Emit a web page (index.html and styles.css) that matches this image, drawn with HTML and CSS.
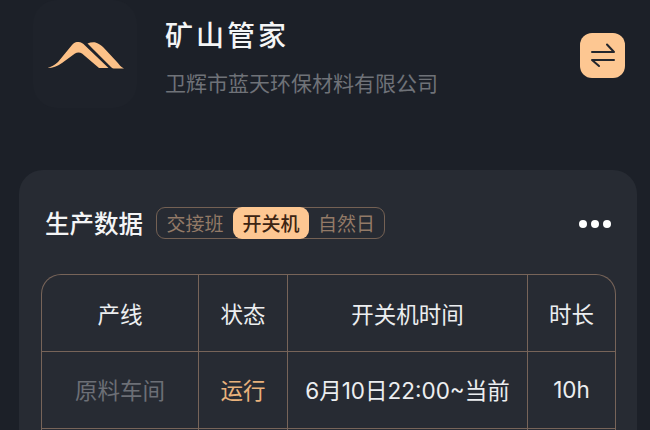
FILE: index.html
```html
<!DOCTYPE html>
<html lang="zh-CN">
<head>
    <meta charset="UTF-8">
    <meta name="viewport" content="width=device-width, initial-scale=1.0">
    <title>矿山管家</title>
    <link rel="stylesheet" href="styles.css">
</head>
<body>
    <div class="page">
        <header class="top-bar">
            <div class="logo-tile">
                <svg class="logo" viewBox="0 0 80 30" width="80" height="30">
                    <path d="M0.500 29 C4 28 8 26 11 23 L25 6 C27 3.500 29 3 31.500 3 C34 3 36 4.500 38 6.500 L61.500 29 L52 29 L35 14.500 C33 13 30 13 28 14.500 L15 24 C10 27.500 6 29 0.500 29 Z" fill="#fcc188"/>
                    <path d="M40.500 4.500 C43 3.500 46 3 48.500 3.500 C52 4.500 54.500 6.500 56.500 8.500 L70 23 C72 25.500 74 28 77 29.500 L68 29.500 C66 29.500 65 29 64 28 L50 14 C47 11 44 8 40.500 4.500 Z" fill="#fcc188"/>
                </svg>
            </div>
            <div class="company">
                <div class="app-name">矿山管家</div>
                <div class="company-name">卫辉市蓝天环保材料有限公司</div>
            </div>
            <button class="switch-btn">
                <svg viewBox="0 0 44 45" width="44" height="45" fill="none" stroke="#23262d" stroke-width="2" stroke-linecap="round" stroke-linejoin="round">
                    <path d="M11 19 H33 L26 11.500"/>
                    <path d="M33 27 H11 L18 33"/>
                </svg>
            </button>
        </header>

        <section class="card">
            <div class="card-head">
                <h2>生产数据</h2>
                <div class="tabs">
                    <span class="tab">交接班</span>
                    <span class="tab active">开关机</span>
                    <span class="tab">自然日</span>
                </div>
                <div class="more">
                    <i></i><i></i><i></i>
                </div>
            </div>

            <table class="data-table">
                <colgroup>
                    <col class="col-line">
                    <col class="col-state">
                    <col class="col-time">
                    <col class="col-len">
                </colgroup>
                <tr>
                    <th>产线</th>
                    <th>状态</th>
                    <th>开关机时间</th>
                    <th>时长</th>
                </tr>
                <tr>
                    <td class="muted">原料车间</td>
                    <td class="running">运行</td>
                    <td>6月10日22:00~当前</td>
                    <td>10h</td>
                </tr>
                <tr>
                    <td></td>
                    <td></td>
                    <td></td>
                    <td></td>
                </tr>
            </table>
        </section>
    </div>
</body>
</html>
```

FILE: styles.css
```css
html, body {
    margin: 0;
    height: 100%;
    overflow: hidden;
}

body {
    background: #1c2028;
    color: #f4f5f6;
    font-family: "Noto Sans CJK SC", "Noto Sans", sans-serif;
}

.page {
    height: 430px;
    overflow: hidden;
}

.top-bar {
    display: flex;
    align-items: flex-start;
    height: 170px;
    padding: 0 25px 0 33px;
    box-sizing: border-box;
}

.logo-tile {
    width: 104px;
    height: 108px;
    border-radius: 24px;
    background: #1e222a;
    display: flex;
    align-items: center;
    justify-content: center;
}

.logo {
    margin-top: -1px;
    margin-left: 3px;
}

.company {
    flex: 1;
    margin-left: 28px;
    padding-top: 14px;
}

.app-name {
    font-size: 28px;
    line-height: 40px;
    font-weight: 500;
    letter-spacing: 3px;
}

.company-name {
    margin-top: 13px;
    font-size: 21px;
    line-height: 30px;
    color: #6f7278;
}

.switch-btn {
    width: 45px;
    height: 45px;
    margin-top: 33px;
    padding: 0;
    border: none;
    border-radius: 12px;
    background: #fdc792;
    display: flex;
    align-items: center;
    justify-content: center;
}

.card {
    margin: 0 13px 0 19px;
    padding: 0 22px;
    height: 300px;
    border-radius: 24px 24px 0 0;
    background: #272b33;
}

.card-head {
    display: flex;
    align-items: center;
    height: 104px;
    padding: 2px 4px 0 4px;
    box-sizing: border-box;
}

h2 {
    margin: 0;
    font-size: 24.500px;
    font-weight: 500;
    line-height: 32px;
}

.tabs {
    display: flex;
    margin-left: 13px;
    height: 32px;
    border: 1px solid #746154;
    border-radius: 9px;
    box-sizing: border-box;
}

.tab {
    width: 76px;
    margin: -1px 0;
    height: 32px;
    font-size: 19px;
    line-height: 31px;
    text-align: center;
    color: #937a67;
    border-radius: 9px;
}

.tab:last-child {
    width: 75px;
}

.tab.active {
    background: #fdc792;
    color: #3c2412;
    font-weight: 500;
}

.more {
    margin-left: auto;
    margin-top: 2px;
    display: flex;
    gap: 4px;
}

.more i {
    display: block;
    width: 8px;
    height: 8px;
    border-radius: 50%;
    background: #fff;
}

.data-table {
    width: 575px;
    table-layout: fixed;
    border-collapse: separate;
    border-spacing: 0;
    border: 1px solid #776459;
    border-bottom: none;
    border-radius: 20px 20px 0 0;
    box-sizing: border-box;
}

.col-line { width: 157px; }
.col-state { width: 89px; }
.col-time { width: 240px; }
.col-len { width: auto; }

th, td {
    height: 74px;
    padding: 0 0 2px;
    font-family: Inter, "Noto Sans CJK SC", sans-serif;
    font-size: 22.500px;
    font-weight: 400;
    text-align: center;
    color: #eceef0;
    border-right: 1px solid #776459;
    border-bottom: 1px solid #776459;
}

th {
    height: 75px;
    padding-bottom: 1px;
}

th:last-child, td:last-child {
    border-right: none;
}

td.muted {
    color: #6c6f76;
}

td.running {
    color: #e9b27c;
}
```
